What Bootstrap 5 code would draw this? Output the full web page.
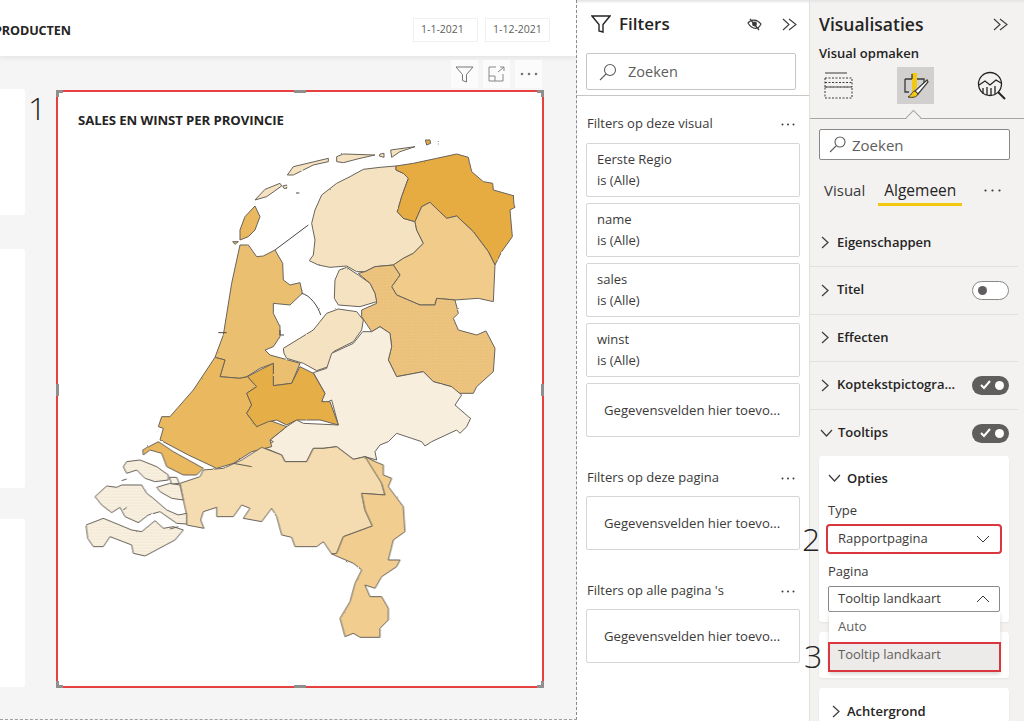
<!DOCTYPE html>
<html lang="nl">
<head>
<meta charset="utf-8">
<title>Power BI tooltips</title>
<link rel="stylesheet" href="https://cdn.jsdelivr.net/npm/bootstrap@5.3.0/dist/css/bootstrap.min.css">
<style>
html,body{margin:0;height:721px;overflow:hidden;background:#fff}
body{font-family:"Open Sans","Noto Sans",sans-serif;color:#252423;font-size:13px;line-height:1.2}
.app{width:1024px;height:721px;position:relative;overflow:hidden}
.cv{width:577px;height:720px;background:#f5f5f5;border-right:1px dashed #8a8a8a;border-bottom:1px dashed #a0a0a0;flex:none;box-shadow:inset 0 3px 2px -1px #e6e6e6;overflow:hidden}
.cv-head{height:56px;padding:3px 26px 0 0;background:#fff;box-shadow:0 2px 5px #e4e4e4}
.cv-title{font-weight:700;font-size:12.6px;color:#252423;margin-left:-6px;letter-spacing:-.1px;padding-top:2px}
.date{width:65px;height:24px;border:1px solid #f0f0f0;font-size:10.5px;color:#605e5c;display:flex;align-items:center;padding-left:7px;margin-left:7px}
.stub{width:25px;background:#fff;border-radius:0 3px 3px 0}
.stub1{height:126px;margin-top:33px}.stub2{height:239px;margin-top:34px}.stub3{height:168px;margin-top:31px}
.vtools{height:28px;margin:4px 0 0;padding-right:2px;gap:5px}
.vtool{width:27px;height:28px;background:#fbfbfb;display:flex;align-items:center;justify-content:center}
.visual{width:488px;height:598px;margin-left:31px;margin-top:2px;border:2px solid #e6403f;background:#fff;position:relative}
.v-title{position:absolute;left:20px;top:21px;font-weight:700;font-size:13.2px;color:#252423;margin:0;letter-spacing:-.1px}
.map{position:absolute;left:-2px;top:-2px;width:488px;height:598px}
.map polygon{stroke:#67625a;stroke-width:3;stroke-linejoin:round}
.hd{position:absolute;background:#8f8f8f}
.fp{width:232px;height:721px;background:#fff;flex:none;box-shadow:inset 0 3px 2px -1px #e6e6e6}
.fp-head{height:48px;padding:0 12px 0 14px}
.fp-head h2{font-size:17px;font-weight:600;margin:0;color:#252423}
.vz-head h2{font-size:17.5px;font-weight:600;margin:0;color:#252423}
.srch{border:1px solid #c8c6c4;border-radius:2px;background:#fff;display:flex;align-items:center;color:#605e5c;font-size:14.5px}
.srch1{height:37px;margin:5px 13px 0 9px;padding-left:12px;gap:11px}
.rule{height:1px;background:#c8c6c4;margin-top:5px}
.fsec{font-size:13px;color:#3b3a39;margin:0;padding:0 14px 0 10px;display:flex;justify-content:space-between;align-items:center;height:20px}
.fbox{margin:0 8px 6px 9px;width:214px;height:54px;border:1px solid #d8d6d4;border-radius:2px;padding:5px 10px;font-size:13px;line-height:21px;color:#3b3a39}
.fadd{display:flex;align-items:center;padding:0 0 0 17px;white-space:nowrap;color:#3b3a39;font-size:13.15px}
.vz{width:215px;height:721px;background:#f3f2f1;flex:none;border-left:1px solid #e3e1df;box-shadow:inset 0 3px 2px -1px #e6e6e6}
.vz-head{height:46px;padding:2px 16px 0 9px}
.vz-sub{font-size:13px;font-weight:600;margin:0 0 0 9px;height:18px;color:#252423}
.vz-ic{height:37px;margin-top:3px;padding:0 18px 0 14px}
.vz-sel{width:37px;height:37px;background:#d2d0ce;display:flex;align-items:center;justify-content:center}
.vz-rule{position:relative;height:1px;background:#a8a6a4;margin-top:14px}
.vz-rule i{position:absolute;left:98px;top:-6px;width:11px;height:11px;background:#f3f2f1;border-left:1px solid #a8a6a4;border-top:1px solid #a8a6a4;transform:rotate(45deg)}
.srch2{height:31px;margin:10px 14px 0 9px;padding-left:9px;gap:6px;border-color:#8a8886;font-size:15px}
.tabs{height:38.5px;margin-top:21px;padding:0 23px 0 14px;font-size:15px;color:#3b3a39;position:relative}
.tab-on{font-weight:500;font-size:15.5px;color:#252423;position:relative;padding:0 6px;margin-left:13px;line-height:18px}
.tab-on::after{content:"";position:absolute;left:0;right:0;top:22px;height:3px;background:#f2c811}
.dots3{margin-left:auto;margin-top:8px}
.sect{height:47.5px;margin:0 6px 0 0;padding:0 9px 0 11px;border-bottom:1px solid #e3e1df;font-size:13px;font-weight:600;color:#252423;gap:7px}
.sect-open{padding-left:10px;gap:5px;border:0}
.sw{width:37px;height:19px;border-radius:10px;margin-left:auto;position:relative;flex:none}
.sw-off{background:#fff;border:1px solid #8a8886}
.sw-off::before{content:"";position:absolute;left:5px;top:4px;width:9px;height:9px;border-radius:50%;background:#605e5c}
.sw-on{background:#605e5c;color:#fff}
.sw-on::after{content:"";position:absolute;right:5px;top:5px;width:9px;height:9px;border-radius:50%;background:#fff}
.pcard{background:#fff;border-radius:3px;margin:0 15px 10px 9px;box-shadow:0 1px 2px #e6e4e2}
.pc1{height:166px;padding:15px 9px 0;margin-top:-1.500px}
.pc2{height:46px}
.pc3{height:60px;padding:16px 13px 0;margin-bottom:0}
.pc-h{font-size:13px;font-weight:600;gap:6px;color:#252423}
.lab{font-size:13px;color:#3b3a39;margin:0}
.sel{height:26px;border:1px solid #8a8886;border-radius:2px;background:#fff;font-size:13px;color:#3b3a39;padding:0 9px}
.redbox{outline:2px solid #d9363e;outline-offset:0;border-color:#fff}
.menu{position:absolute;left:829px;top:612px;width:171px;height:60px;background:#fff;box-shadow:0 2px 4px #d8d6d4;font-size:13px;color:#605e5c}
.mi{height:30px;padding-left:9px;display:flex;align-items:center}
.mi-sel{height:28px;margin-top:1px;background:#edebe9;outline:2px solid #d9363e;outline-offset:-1px;color:#605e5c;padding-bottom:4px}
.num{position:absolute;font-size:32px;line-height:1;color:#252423;font-weight:300;margin:0}
svg{display:block;flex:none}
</style>
</head>
<body>
<div class="app d-flex">
  <div class="cv">
    <div class="cv-head d-flex align-items-center justify-content-between">
      <span class="cv-title">PRODUCTEN</span>
      <div class="d-flex"><span class="date">1-1-2021</span><span class="date">1-12-2021</span></div>
    </div>
    <div class="d-flex">
      <div class="d-flex flex-column flex-shrink-0">
        <div class="stub stub1"></div><div class="stub stub2"></div><div class="stub stub3"></div>
      </div>
      <div class="d-flex flex-column">
        <div class="vtools d-flex justify-content-end">
          <div class="vtool"><svg width="19" height="17" viewBox="0 0 19 17" fill="none" stroke="#77757a"><path d="M1 1h17l-6.500 7.500v7.500l-4-1.500V8.500z"/></svg></div>
          <div class="vtool"><svg width="17" height="16" viewBox="0 0 17 16" fill="none" stroke="#8a8886"><path d="M8 1H1v14h14V8M1 10h6v5M10 6l6-5M12 1h4v4"/></svg></div>
          <div class="vtool"><svg width="18" height="4" viewBox="0 0 18 4" fill="#77757a"><circle cx="2" cy="2" r="1.300"/><circle cx="9" cy="2" r="1.300"/><circle cx="16" cy="2" r="1.300"/></svg></div>
        </div>
        <div class="visual">
          <h3 class="v-title">SALES EN WINST PER PROVINCIE</h3>
          <svg class="map" viewBox="56 90 488 598" aria-label="Kaart van Nederland">
            <defs>
              <filter id="rough" x="-5%" y="-5%" width="110%" height="110%" filterUnits="objectBoundingBox">
                <feTurbulence type="fractalNoise" baseFrequency="0.18" numOctaves="2" seed="4" result="n"/>
                <feDisplacementMap in="SourceGraphic" in2="n" scale="1.600" xChannelSelector="R" yChannelSelector="G"/>
                <feGaussianBlur stdDeviation="0.250"/>
              </filter>
              <pattern id="dotA" width="9" height="9" patternUnits="userSpaceOnUse"><rect width="9" height="9" fill="#edc47f"/><circle cx="3" cy="3" r="1.500" fill="#e0b163"/></pattern>
              <pattern id="dotB" width="9" height="9" patternUnits="userSpaceOnUse"><rect width="9" height="9" fill="#f8f0e0"/><circle cx="3" cy="3" r="1.600" fill="#e8d6b2"/></pattern>
            </defs>
            <g filter="url(#rough)">
            <g transform="translate(60 130) scale(.33333)">
              <polygon fill="#f5e2c0" points="1008,108 960,112 910,118 870,140 830,160 785,195 765,240 755,280 765,330 760,375 748,392 775,405 810,412 860,408 890,425 915,425 945,410 1000,405 1030,385 1060,370 1090,340 1070,300 1065,275 1030,265 1012,245 1025,200 1045,145 1030,130 1008,120"/>
              <polygon fill="#e6ac42" points="1008,108 1060,100 1130,85 1190,72 1225,82 1235,125 1270,155 1298,160 1300,180 1360,197 1362,225 1365,232 1350,240 1357,320 1325,365 1305,405 1285,365 1240,305 1190,258 1160,265 1110,217 1085,230 1065,275 1030,265 1012,245 1025,200 1045,145 1030,130 1008,120"/>
              <polygon fill="#f0cb8a" points="1110,217 1160,265 1190,258 1240,305 1285,365 1305,405 1300,515 1255,505 1185,510 1130,505 1125,525 1080,525 1010,495 995,470 1020,435 1000,405 1030,385 1060,370 1090,340 1070,300 1065,275 1085,230"/>
              <polygon fill="url(#dotA)" points="895,430 915,425 945,410 1000,405 1020,435 995,470 1010,495 1080,525 1125,525 1130,505 1185,510 1195,550 1180,565 1195,600 1250,615 1278,603 1305,655 1300,725 1250,770 1240,790 1180,790 1175,770 1120,755 1090,725 1010,740 985,690 995,650 990,610 960,590 935,605 905,560 905,540 950,520 945,490 930,460"/>
              <polygon fill="#f5e2c0" points="860,412 895,435 930,460 945,490 950,515 900,530 835,525 823,505 825,450 838,420"/>
              <polygon fill="#f5e2c0" points="670,655 760,600 800,550 835,537 890,545 910,570 905,600 880,635 820,665 805,710 770,722 730,700 680,685 672,670"/>
              <polygon fill="#f7eedd" points="760,728 800,715 815,670 880,640 908,605 935,605 960,590 990,610 995,650 985,690 1010,740 1090,725 1120,755 1175,770 1205,795 1185,825 1225,860 1232,865 1220,890 1200,910 1190,900 1115,935 1095,948 1085,935 1055,925 1010,910 985,935 960,945 945,965 950,990 915,980 880,988 830,950 790,955 760,955 740,995 675,995 665,975 610,952 640,935 630,930 680,890 710,870 730,880 835,885 815,810 795,820 785,810 795,790"/>
              <polygon fill="#ebbf70" points="540,345 565,345 590,380 610,378 645,360 668,400 670,450 690,465 720,458 727,490 690,525 640,520 640,550 660,590 660,620 640,650 615,660 630,675 720,700 695,760 640,767 640,700 600,715 560,740 540,745 480,740 495,690 465,682 490,615 515,460"/>
              <polygon fill="#e9b85f" points="465,682 495,690 480,740 540,745 563,740 590,770 560,790 575,825 560,850 590,890 625,870 680,890 630,930 635,950 575,965 520,1000 470,1015 385,975 300,930 310,895 295,890 305,860 330,860 400,780"/>
              <polygon fill="#e6ae47" points="563,740 600,720 640,700 640,767 695,760 720,710 760,730 795,790 785,815 810,815 835,885 780,870 740,870 710,870 680,885 650,870 625,875 590,890 560,850 575,825 560,790 590,770"/>
              <polygon fill="#e9b85f" points="585,228 600,260 585,300 565,320 540,330 540,300 555,260"/>
              <polygon fill="#e9b85f" points="518,335 535,335 525,343"/>
              <polygon fill="#f5e2c0" points="585,210 615,178 660,160 665,168 620,200"/>
              <polygon fill="#f5e2c0" points="668,168 680,165 680,175 672,175"/>
              <polygon fill="#f5e2c0" points="682,135 700,110 805,85 805,95 760,105 700,135"/>
              <polygon fill="#f5e2c0" points="830,80 850,72 945,75 900,85 850,98 830,95"/>
              <polygon fill="#f5e2c0" points="960,72 972,70 972,82 958,78"/>
              <polygon fill="#f5e2c0" points="992,60 1065,50 1020,65 995,82"/>
              <polygon fill="#e6ac42" points="1096,30 1110,30 1112,40 1100,45"/>
              <path d="M645 360L745 285M725 490C750 495 775 530 782 555M708 189h10M1135 33v2M1135 41v2M475 608h25M660 600v15h12" fill="none" stroke="#4b4640" stroke-width="3"/>
            </g>
            <g transform="translate(60 400) scale(.33333)">
              <polygon fill="#e9b85f" points="248,150 295,125 340,155 385,180 430,205 410,225 370,225 320,200 305,160 270,150 250,165"/>
              <polygon fill="#f4dcb0" points="360,250 420,230 430,210 490,205 545,180 605,142 665,165 675,185 740,185 760,145 790,145 830,140 880,178 915,170 945,185 965,250 975,285 905,280 915,330 937,378 850,410 830,460 815,462 790,425 770,440 705,440 695,412 665,405 650,350 635,325 605,365 550,355 570,325 545,315 520,350 470,350 470,322 430,335 422,360 432,385 380,375 380,345 370,300"/>
              <polygon fill="#f1cd8f" points="915,170 945,185 970,195 970,225 995,235 985,260 1030,320 1035,395 1000,420 985,480 1020,480 1010,500 965,530 945,565 915,555 930,590 965,590 985,625 985,660 960,685 960,712 900,712 880,700 855,710 840,655 870,605 885,550 905,510 880,490 815,462 830,460 850,410 937,378 915,330 905,280 975,285 965,250"/>
              <polygon fill="url(#dotB)" points="190,200 200,185 240,180 290,200 325,225 325,240 285,245 255,235 230,210 200,220"/>
              <polygon fill="url(#dotB)" points="290,262 330,250 360,255 370,300 335,295 300,275"/>
              <polygon fill="url(#dotB)" points="105,290 140,258 170,262 185,255 245,255 260,280 280,295 320,330 355,345 380,340 380,372 350,370 300,335 265,345 235,368 195,350 180,322 155,338 125,315"/>
              <polygon fill="url(#dotB)" points="78,375 130,355 215,390 245,395 285,362 310,385 340,380 370,390 345,420 255,468 220,460 215,435 150,410 130,440 100,440 83,415"/>
              <polygon fill="#f8f0e0" points="328,232 350,232 358,250 335,252"/>
              <path d="M520 190L575 200M185 242l15-5M330 387l25-7M190 330l10-8" fill="none" stroke="#5f5a52" stroke-width="3"/>
            </g>
            </g>
          </svg>
          <span class="hd" style="left:-2px;top:-2px;width:7px;height:3px"></span>
          <span class="hd" style="left:-2px;top:-2px;width:3px;height:7px"></span>
          <span class="hd" style="left:236px;top:-2px;width:12px;height:3px"></span>
          <span class="hd" style="right:-2px;top:-2px;width:7px;height:3px"></span>
          <span class="hd" style="right:-2px;top:-2px;width:3px;height:7px"></span>
          <span class="hd" style="left:-2px;top:292px;width:3px;height:12px"></span>
          <span class="hd" style="right:-2px;top:292px;width:3px;height:12px"></span>
          <span class="hd" style="left:-2px;bottom:-2px;width:7px;height:3px"></span>
          <span class="hd" style="left:-2px;bottom:-2px;width:3px;height:7px"></span>
          <span class="hd" style="left:236px;bottom:-2px;width:12px;height:3px"></span>
          <span class="hd" style="right:-2px;bottom:-2px;width:7px;height:3px"></span>
          <span class="hd" style="right:-2px;bottom:-2px;width:3px;height:7px"></span>
        </div>
      </div>
    </div>
  </div>

  <div class="fp">
    <div class="fp-head d-flex align-items-center">
      <svg width="20" height="20" viewBox="0 0 20 20" fill="none" stroke="#252423" stroke-width="1.400"><path d="M1 2h18l-7 8.500V18l-4-1v-6.500z"/></svg>
      <h2 class="ms-2">Filters</h2>
      <svg class="ms-auto" width="15" height="13" viewBox="0 0 15 13" fill="none" stroke="#3b3a39" stroke-width="1.200"><path d="M1 5c3-4 9-4 13 1-1 2-2 3-3 4-3 1-7 0-10-5zM3 1l9 11"/><circle cx="7.500" cy="6" r="1.800" fill="#3b3a39"/></svg>
      <svg style="margin-left:20px" width="15" height="13" viewBox="0 0 15 13" fill="none" stroke="#3b3a39" stroke-width="1.100"><path d="M1 1l6 5.500L1 12M7 1l7 5.500L7 12"/></svg>
    </div>
    <div class="srch srch1">
      <svg width="18" height="18" viewBox="0 0 18 18" fill="none" stroke="#605e5c" stroke-width="1.100"><circle cx="11" cy="7" r="5.500"/><path d="M7 11l-6 6"/></svg>
      <span>Zoeken</span>
    </div>
    <div class="rule"></div>
    <div class="fsec" style="margin-top:18px"><span>Filters op deze visual</span><svg width="14" height="3" viewBox="0 0 14 3" fill="#3b3a39"><circle cx="1.500" cy="1.500" r="1"/><circle cx="7" cy="1.500" r="1"/><circle cx="12.500" cy="1.500" r="1"/></svg></div>
    <div class="fbox" style="margin-top:9px">Eerste Regio<br>is (Alle)</div>
    <div class="fbox">name<br>is (Alle)</div>
    <div class="fbox">sales<br>is (Alle)</div>
    <div class="fbox">winst<br>is (Alle)</div>
    <div class="fbox fadd">Gegevensvelden hier toevo...</div>
    <div class="fsec" style="margin-top:31px"><span>Filters op deze pagina</span><svg width="14" height="3" viewBox="0 0 14 3" fill="#3b3a39"><circle cx="1.500" cy="1.500" r="1"/><circle cx="7" cy="1.500" r="1"/><circle cx="12.500" cy="1.500" r="1"/></svg></div>
    <div class="fbox fadd" style="margin-top:8px">Gegevensvelden hier toevo...</div>
    <div class="fsec" style="margin-top:31px"><span>Filters op alle pagina 's</span><svg width="14" height="3" viewBox="0 0 14 3" fill="#3b3a39"><circle cx="1.500" cy="1.500" r="1"/><circle cx="7" cy="1.500" r="1"/><circle cx="12.500" cy="1.500" r="1"/></svg></div>
    <div class="fbox fadd" style="margin-top:8px">Gegevensvelden hier toevo...</div>
  </div>

  <div class="vz">
    <div class="vz-head d-flex align-items-center justify-content-between">
      <h2>Visualisaties</h2>
      <svg width="15" height="13" viewBox="0 0 15 13" fill="none" stroke="#3b3a39" stroke-width="1.100"><path d="M1 1l6 5.500L1 12M7 1l7 5.500L7 12"/></svg>
    </div>
    <p class="vz-sub">Visual opmaken</p>
    <div class="vz-ic d-flex align-items-center justify-content-between">
      <svg width="29" height="28" viewBox="0 0 29 28" fill="none" stroke="#3b3a39"><path d="M1 1h22"/><path stroke-dasharray="2 1.500" d="M1 6h27v9H1zM1 15h27v11H1zM1 10.500h27"/></svg>
      <div class="vz-sel"><svg width="27" height="29" viewBox="0 0 27 29"><path d="M10 2h5v14l-5 6z" fill="#f2c811"/><path d="M10 3v5M3 8h7M3 8v13h4M15 8h7v4" fill="none" stroke="#3b3a39" stroke-width="1.300"/><path d="M25 9L13 20l3 3L26 11z" fill="#fff" stroke="#3b3a39" stroke-width="1.200"/><path d="M13 20c-3 0-3 4-7 6 5 1 9 0 10-3z" fill="#f2c811" stroke="#3b3a39"/></svg></div>
      <svg width="29" height="29" viewBox="0 0 29 29" fill="none" stroke="#252423" stroke-width="1.300"><circle cx="13" cy="13" r="11.500"/><path d="M21 21l7 7" stroke-width="2"/><path d="M2 14l6-4 5 4 6-5 5 3M6 17v6M10 16v8M14 17v8M18 15v8"/></svg>
    </div>
    <div class="vz-rule"><i></i></div>
    <div class="srch srch2">
      <svg width="17" height="17" viewBox="0 0 17 17" fill="none" stroke="#605e5c" stroke-width="1.100"><circle cx="11" cy="6" r="5"/><path d="M7 10l-6 6"/></svg>
      <span>Zoeken</span>
    </div>
    <div class="tabs d-flex align-items-start">
      <span>Visual</span>
      <span class="tab-on">Algemeen</span>
      <svg class="dots3" width="17" height="3" viewBox="0 0 17 3" fill="#3b3a39"><circle cx="1.500" cy="1.500" r="1.100"/><circle cx="8.500" cy="1.500" r="1.100"/><circle cx="15.500" cy="1.500" r="1.100"/></svg>
    </div>
    <div class="sect d-flex align-items-center"><svg width="9" height="13" viewBox="0 0 9 13" fill="none" stroke="#3b3a39" stroke-width="1.200"><path d="M1 1l6 5.500L1 12"/></svg><span>Eigenschappen</span></div>
    <div class="sect d-flex align-items-center"><svg width="9" height="13" viewBox="0 0 9 13" fill="none" stroke="#3b3a39" stroke-width="1.200"><path d="M1 1l6 5.500L1 12"/></svg><span>Titel</span><span class="sw sw-off"></span></div>
    <div class="sect d-flex align-items-center"><svg width="9" height="13" viewBox="0 0 9 13" fill="none" stroke="#3b3a39" stroke-width="1.200"><path d="M1 1l6 5.500L1 12"/></svg><span>Effecten</span></div>
    <div class="sect d-flex align-items-center"><svg width="9" height="13" viewBox="0 0 9 13" fill="none" stroke="#3b3a39" stroke-width="1.200"><path d="M1 1l6 5.500L1 12"/></svg><span>Koptekstpictogra...</span><span class="sw sw-on"><svg width="12" height="10" viewBox="0 0 12 10" fill="none" stroke="#fff" stroke-width="2" class="ms-2 mt-1"><path d="M1 5l3 3 6-7"/></svg></span></div>
    <div class="sect sect-open d-flex align-items-center"><svg width="13" height="9" viewBox="0 0 13 9" fill="none" stroke="#3b3a39" stroke-width="1.200"><path d="M1 1l5.500 6L12 1"/></svg><span>Tooltips</span><span class="sw sw-on"><svg width="12" height="10" viewBox="0 0 12 10" fill="none" stroke="#fff" stroke-width="2" class="ms-2 mt-1"><path d="M1 5l3 3 6-7"/></svg></span></div>
    <div class="pcard pc1">
      <div class="pc-h d-flex align-items-center"><svg width="13" height="9" viewBox="0 0 13 9" fill="none" stroke="#3b3a39" stroke-width="1.200"><path d="M1 1l5.500 6L12 1"/></svg><span>Opties</span></div>
      <p class="lab" style="margin-top:17px">Type</p>
      <div class="sel redbox d-flex align-items-center justify-content-between" style="margin-top:7px">
        <span>Rapportpagina</span><svg width="14" height="8" viewBox="0 0 14 8" fill="none" stroke="#3b3a39"><path d="M1 1l6 6 6-6"/></svg>
      </div>
      <p class="lab" style="margin-top:12px">Pagina</p>
      <div class="sel d-flex align-items-center justify-content-between" style="margin-top:7px">
        <span>Tooltip landkaart</span><svg width="14" height="8" viewBox="0 0 14 8" fill="none" stroke="#3b3a39"><path d="M1 7l6-6 6 6"/></svg>
      </div>
    </div>
    <div class="pcard pc2"></div>
    <div class="pcard pc3">
      <div class="pc-h d-flex align-items-center"><svg width="9" height="13" viewBox="0 0 9 13" fill="none" stroke="#3b3a39" stroke-width="1.200"><path d="M1 1l6 5.500L1 12"/></svg><span>Achtergrond</span></div>
    </div>
  </div>

  <div class="menu">
    <div class="mi">Auto</div>
    <div class="mi mi-sel">Tooltip landkaart</div>
  </div>
  <p class="num" style="left:28px;top:92px">1</p>
  <p class="num" style="left:802px;top:523px">2</p>
  <p class="num" style="left:804px;top:640px">3</p>
</div>
</body>
</html>
